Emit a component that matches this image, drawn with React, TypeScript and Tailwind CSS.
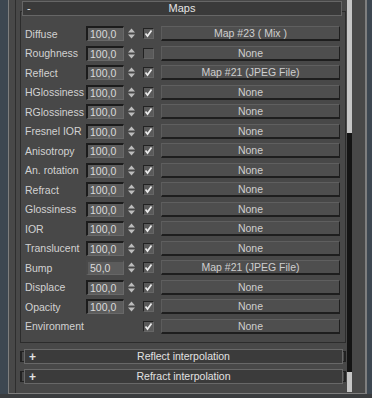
import React from "react";

type Row = { l: string; v?: string; c: boolean; m: string; soft?: boolean };

const rows: Row[] = [
  { l: "Diffuse", v: "100,0", c: true, m: "Map #23 ( Mix )" },
  { l: "Roughness", v: "100,0", c: false, m: "None" },
  { l: "Reflect", v: "100,0", c: true, m: "Map #21 (JPEG File)" },
  { l: "HGlossiness", v: "100,0", c: true, m: "None" },
  { l: "RGlossiness", v: "100,0", c: true, m: "None" },
  { l: "Fresnel IOR", v: "100,0", c: true, m: "None" },
  { l: "Anisotropy", v: "100,0", c: true, m: "None" },
  { l: "An. rotation", v: "100,0", c: true, m: "None" },
  { l: "Refract", v: "100,0", c: true, m: "None" },
  { l: "Glossiness", v: "100,0", c: true, m: "None" },
  { l: "IOR", v: "100,0", c: true, m: "None" },
  { l: "Translucent", v: "100,0", c: true, m: "None" },
  { l: "Bump", v: "50,0", c: true, m: "Map #21 (JPEG File)", soft: true },
  { l: "Displace", v: "100,0", c: true, m: "None" },
  { l: "Opacity", v: "100,0", c: true, m: "None" },
  { l: "Environment", c: true, m: "None" },
];

function Spinner() {
  return (
    <svg width="9" height="13" viewBox="0 0 9 13" className="block">
      <polygon points="4.5,1.5 8,5.5 1,5.5" fill="#bdbdbd" />
      <polygon points="1,7.5 8,7.5 4.5,11.5" fill="#bdbdbd" />
    </svg>
  );
}

function Check({ on }: { on: boolean }) {
  return (
    <div className="w-[11px] h-[11px] bg-[#5a5a5a] border-t border-l border-[#222] border-b border-r border-b-[#666] border-r-[#666] flex items-center justify-center">
      {on && (
        <svg width="9" height="9" viewBox="0 0 9 9" className="block">
          <polyline points="1.5,4.5 3.5,7 7.5,1.5" fill="none" stroke="#ececec" strokeWidth="1.7" />
        </svg>
      )}
    </div>
  );
}

function RowView({ r }: { r: Row }) {
  return (
    <div className="h-[19.5px] flex items-center">
      <div className="w-[61px] text-[#d2d2d2] text-[10.5px] leading-none whitespace-nowrap">{r.l}</div>
      {r.v ? (
        <>
          <div
            className={
              "w-[38px] h-[15px] bg-[#5c5c5c] flex items-center pl-[2px] text-[#dadada] text-[10.5px] leading-none border-t-2 border-l-2 border-b border-r " +
              (r.soft
                ? "border-t-[#4a4a4a] border-l-[#4a4a4a] border-b-[#666] border-r-[#666]"
                : "border-t-[#1c1c1c] border-l-[#1c1c1c] border-b-[#686868] border-r-[#686868]")
            }
          >
            {r.v}
          </div>
          <div className="ml-[3px] w-[9px]">
            <Spinner />
          </div>
        </>
      ) : (
        <div className="w-[50px]" />
      )}
      <div className="ml-[7px]">
        <Check on={r.c} />
      </div>
      <div className="ml-[7px] flex-1 h-[15px] bg-[#4e4e4e] border-t border-l border-t-[#5f5f5f] border-l-[#5c5c5c] border-b-2 border-r border-b-[#1e1e1e] border-r-[#1e1e1e] flex items-center justify-center text-[#cfcfcf] text-[10.5px] leading-none whitespace-nowrap">
        {r.m}
      </div>
    </div>
  );
}

function Bar({ label }: { label: string }) {
  return (
    <div className="flex items-center ml-[4px] h-[15px]">
      <div className="w-[4px] h-[11px] border-l-2 border-t border-b border-[#222]" />
      <div className="w-[319px] h-[15px] bg-[#3b3b3b] border border-[#686868] flex items-center text-[#e2e2e2] text-[10.5px] leading-none">
        <span className="w-[14px] pl-[4px] text-[12px] font-bold">+</span>
        <span className="flex-1 text-center pr-[14px]">{label}</span>
      </div>
      <div className="w-[3px] h-[11px] border-r-2 border-t border-b border-[#222]" />
    </div>
  );
}

export default function App() {
  return (
    <div
      className="w-[372px] h-[398px] bg-[#3d4751] flex flex-col overflow-hidden"
      style={{ fontFamily: '"Liberation Sans", Arial, sans-serif' }}
    >
      <div className="flex h-[394px]">
        <div className="w-[8px]" />
        <div className="w-[359px] h-[394px] border-l border-r-2 border-b border-[#7e7e7e] bg-[#484848] flex">
          <div className="w-[6px]" />
          <div className="w-[1px] bg-[#2e2e2e]" />
          <div className="w-[331px] flex flex-col">
            <div className="ml-[4px] w-[326px] mt-[11px] h-[332px] border border-[#2c2c2c] flex flex-col">
              <div className="mt-[-11px] ml-[1px] mr-[3px] h-[15px] bg-[#3a3a3a] border border-[#666] flex items-center text-[#e4e4e4] text-[11px] leading-none">
                <span className="w-[14px] pl-[4px]">-</span>
                <span className="flex-1 text-center pr-[14px]">Maps</span>
              </div>
              <div className="mt-[8px] pl-[4px] pr-[5px] flex flex-col">
                {rows.map((r) => (
                  <RowView key={r.l} r={r} />
                ))}
              </div>
            </div>
            <div className="mt-[6px] flex flex-col gap-[5px]">
              <Bar label="Reflect interpolation" />
              <Bar label="Refract interpolation" />
            </div>
          </div>
          <div className="w-[5px] flex flex-col">
            <div className="h-[133px] bg-[#c6c6c6]" />
            <div className="h-[239px] bg-[#141414]" />
            <div className="h-[20px] bg-[#c6c6c6]" />
          </div>
          <div className="flex-1" />
        </div>
        <div className="flex-1" />
      </div>
      <div className="h-[4px] bg-[#3a3c3e]" />
    </div>
  );
}
